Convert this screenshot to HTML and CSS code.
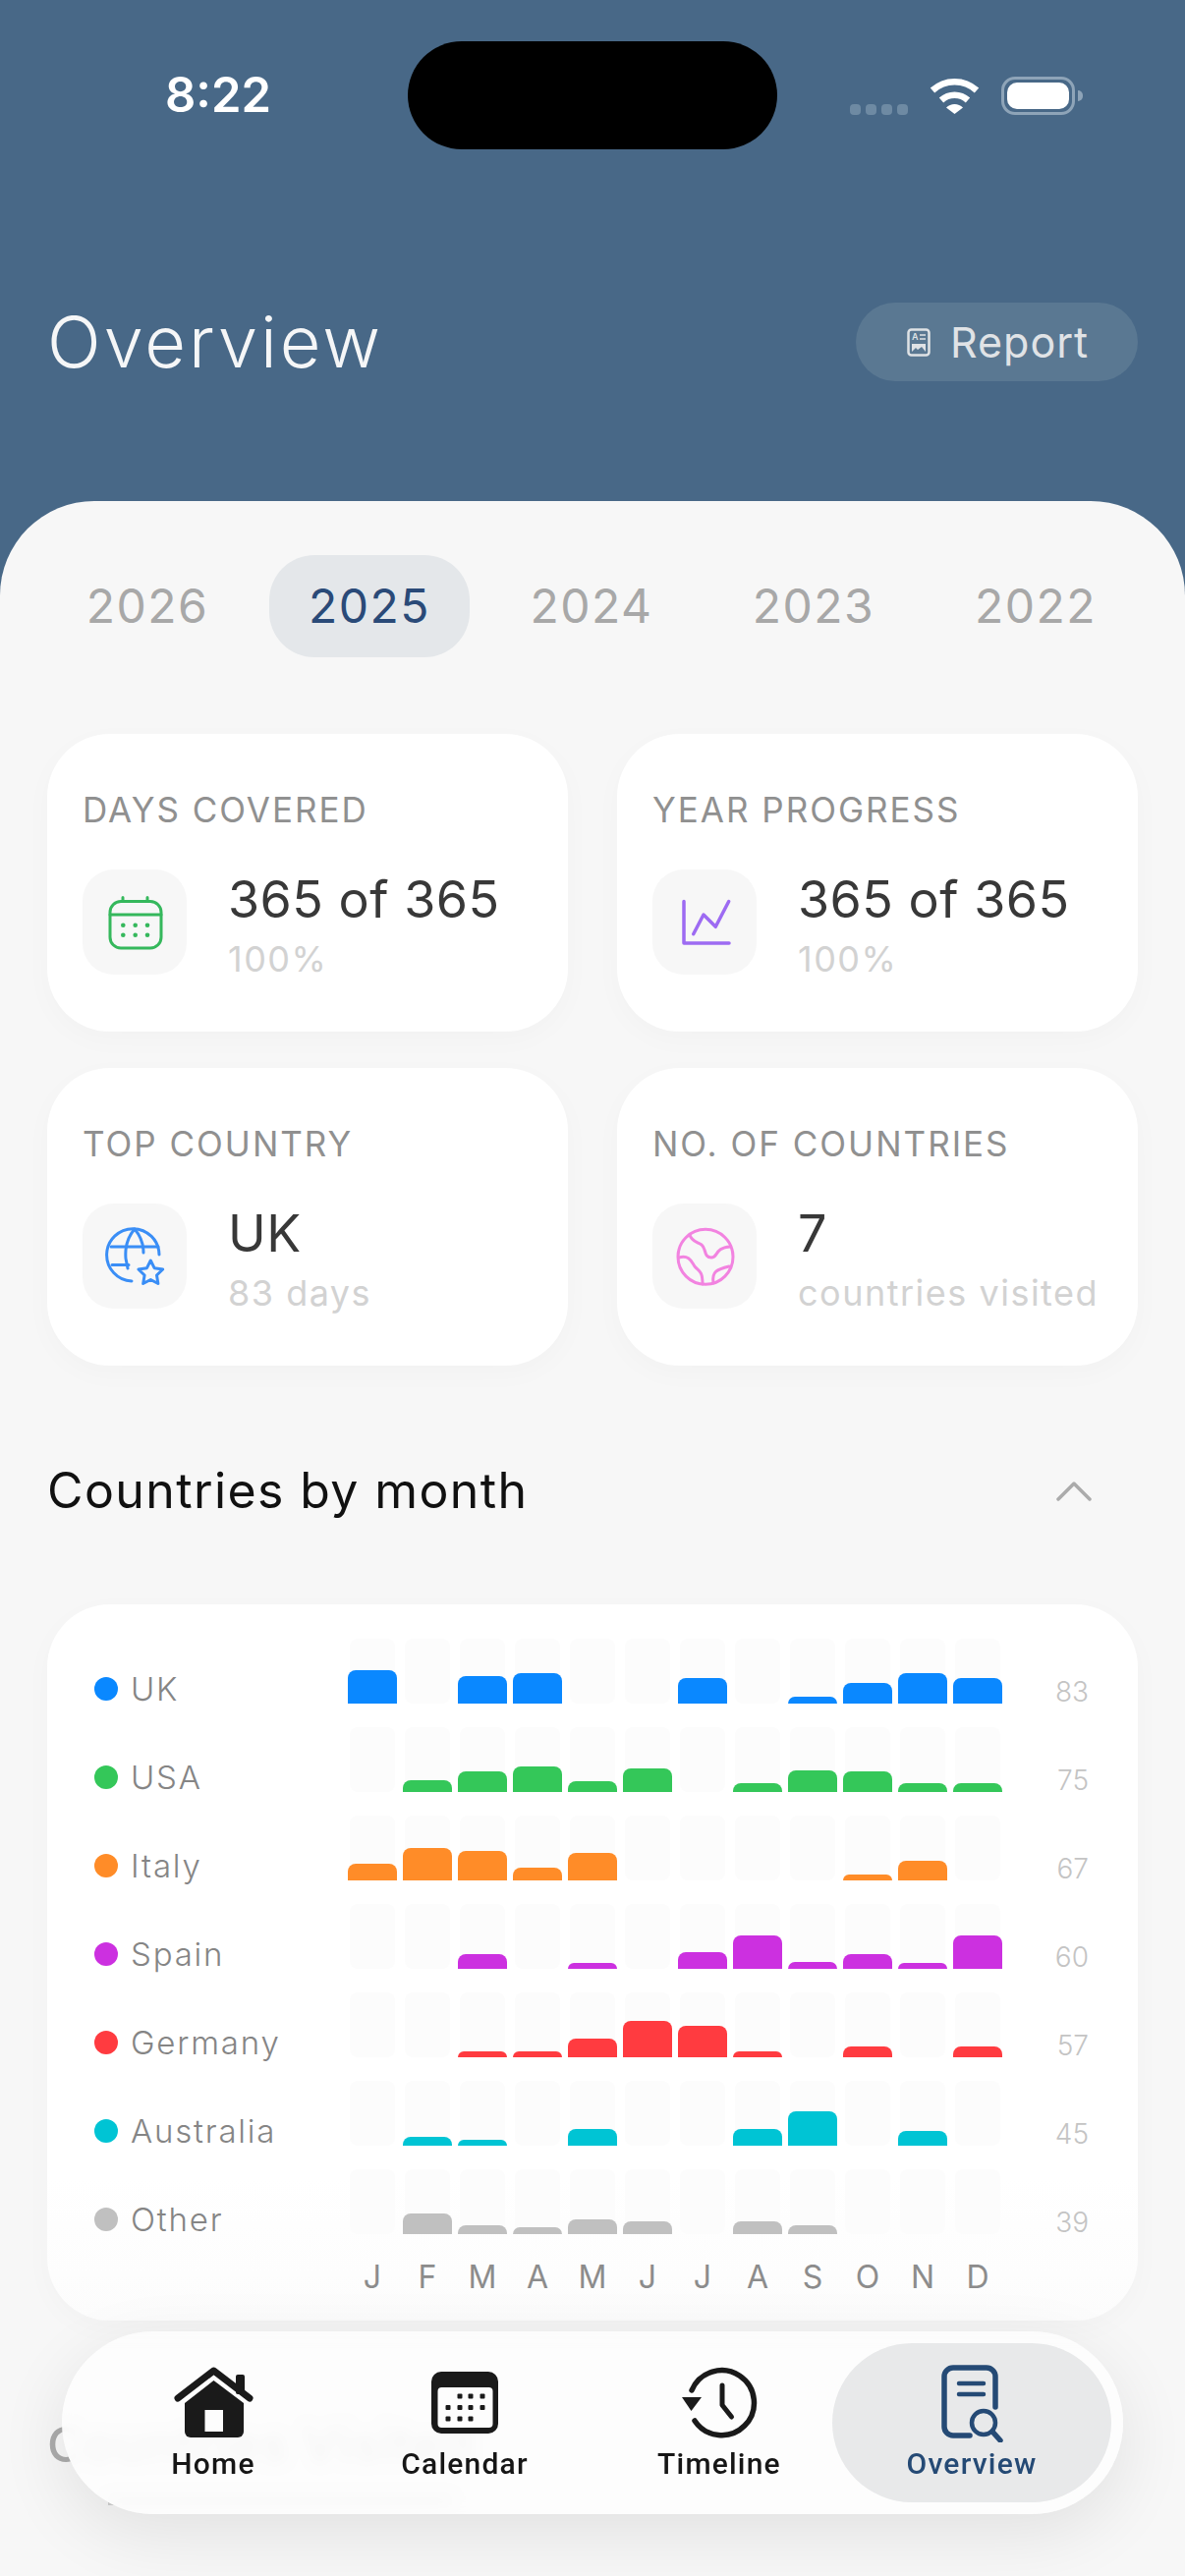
FILE: index.html
```html
<!DOCTYPE html>
<html>
	<head>
		<meta charset="utf-8">
		<title>Overview</title>
		<link rel="stylesheet" href="styles.css">
	</head>
	<body>
		<div id="phone">
			<div id="top">
				<div class="status">
					<span class="time">8:22</span>
					<span class="island"></span>
					<div class="status-icons">
						<span class="signal"><i></i><i></i><i></i><i></i></span>
						<svg class="wifi" width="51" height="37" viewBox="0 0 51 37">
							<path d="M3 13A33 33 0 0 1 48 13" fill="none" stroke="#fff" stroke-width="6.500"/>
							<path d="M12 23A20 20 0 0 1 39 23" fill="none" stroke="#fff" stroke-width="6.500"/>
							<path d="M17 30.500A12 12 0 0 1 34 30.500L25.500 37Z" fill="#fff"/>
						</svg>
						<span class="battery"><i></i></span>
						<span class="battery-cap"></span>
					</div>
				</div>
				<div class="title-row">
					<h1>Overview</h1>
					<div class="report">
						<svg width="24" height="29" viewBox="0 0 24 29">
							<rect x="1.500" y="1.500" width="21" height="26" rx="3" fill="none" stroke="#dfe2e5" stroke-width="2.500"/>
							<text x="5" y="12" class="report-a">A</text>
							<path d="M13 7H19M13 11H19" stroke="#dfe2e5" stroke-width="1.500"/>
							<path d="M5 24V16H19V24L15 19L11 22L9 20Z" fill="#dfe2e5"/>
						</svg>
						<span>Report</span>
					</div>
				</div>
			</div>

			<div id="sheet">
				<div class="years">
					<span>2026</span>
					<span class="on">2025</span>
					<span>2024</span>
					<span>2023</span>
					<span>2022</span>
				</div>

				<div class="stats">
					<div class="stat">
						<p class="stat-label">DAYS COVERED</p>
						<div class="stat-body">
							<div class="stat-icon">
								<svg width="106" height="106" viewBox="0 0 106 106" fill="none" stroke="#35b85c" stroke-width="3" stroke-linecap="round">
									<rect x="28" y="32.500" width="52" height="47.500" rx="11"/>
									<path d="M28 46H80M41 28.500V32.500M66 28.500V32.500"/>
									<g fill="#35b85c" stroke="none">
										<circle cx="41.300" cy="56.700" r="2.300"/><circle cx="53.700" cy="56.700" r="2.300"/><circle cx="66" cy="56.700" r="2.300"/>
										<circle cx="41.300" cy="66.700" r="2.300"/><circle cx="53.700" cy="66.700" r="2.300"/><circle cx="66" cy="66.700" r="2.300"/>
									</g>
								</svg>
							</div>
							<div>
								<p class="stat-value">365 of 365</p>
								<p class="stat-sub">100%</p>
							</div>
						</div>
					</div>
					<div class="stat">
						<p class="stat-label">YEAR PROGRESS</p>
						<div class="stat-body">
							<div class="stat-icon">
								<svg width="106" height="106" viewBox="0 0 106 106" fill="none" stroke="#9d6bf2" stroke-width="3.500" stroke-linecap="round" stroke-linejoin="round">
									<path d="M32 32.500V75H78"/>
									<path d="M41.700 65.700L52 46L64.300 58.300L77.700 32.500"/>
								</svg>
							</div>
							<div>
								<p class="stat-value">365 of 365</p>
								<p class="stat-sub">100%</p>
							</div>
						</div>
					</div>
					<div class="stat">
						<p class="stat-label">TOP COUNTRY</p>
						<div class="stat-body">
							<div class="stat-icon">
								<svg width="106" height="106" viewBox="0 0 106 106" fill="none" stroke="#3a8ef6" stroke-width="3" stroke-linecap="round" stroke-linejoin="round">
									<path d="M78 52A26.700 26.700 0 1 0 50 79"/>
									<path d="M29 44H77M30 62.500H47"/>
									<path d="M53 26C46 34 43 44 44 56L46 66M53 26C59 33 62 40 62 50"/>
									<path d="M69.300 58L73.100 65.700L81.700 67L75.500 73L76.900 81.500L69.300 77.500L61.700 81.500L63.100 73L56.900 67L65.500 65.700Z"/>
								</svg>
							</div>
							<div>
								<p class="stat-value">UK</p>
								<p class="stat-sub">83 days</p>
							</div>
						</div>
					</div>
					<div class="stat">
						<p class="stat-label">NO. OF COUNTRIES</p>
						<div class="stat-body">
							<div class="stat-icon">
								<svg width="106" height="106" viewBox="0 0 106 106" fill="none" stroke="#f283e0" stroke-width="3" stroke-linecap="round">
									<circle cx="54" cy="54.300" r="28"/>
									<path d="M38 32C40 39 46 39 50 42C55 46 52 55 60 55C67 55 63 45 79 44"/>
									<path d="M27 55C38 52 40 60 43 64C47 69 51 68 51 82"/>
									<path d="M62 81C60 69 66 67 78 64"/>
								</svg>
							</div>
							<div>
								<p class="stat-value">7</p>
								<p class="stat-sub">countries visited</p>
							</div>
						</div>
					</div>
				</div>

				<div class="section-head">
					<h2>Countries by month</h2>
					<svg class="chevron" width="38" height="23" viewBox="0 0 38 23" fill="none" stroke="#ababab" stroke-width="3.500" stroke-linecap="round" stroke-linejoin="round">
						<path d="M3 20L19 4L35 20"/>
					</svg>
				</div>

				<div class="chart">
					<div class="row">
						<div class="legend"><i class="dot uk"></i>UK</div>
						<div class="cells uk">
							<i><b style="height:34px"></b></i><i></i><i><b style="height:28px"></b></i><i><b style="height:31px"></b></i><i></i><i></i>
							<i><b style="height:26px"></b></i><i></i><i><b style="height:7px"></b></i><i><b style="height:21px"></b></i><i><b style="height:31px"></b></i><i><b style="height:26px"></b></i>
						</div>
						<div class="count">83</div>
					</div>
					<div class="row">
						<div class="legend"><i class="dot usa"></i>USA</div>
						<div class="cells usa">
							<i></i><i><b style="height:12px"></b></i><i><b style="height:21px"></b></i><i><b style="height:26px"></b></i><i><b style="height:11px"></b></i><i><b style="height:24px"></b></i>
							<i></i><i><b style="height:9px"></b></i><i><b style="height:22px"></b></i><i><b style="height:21px"></b></i><i><b style="height:9px"></b></i><i><b style="height:9px"></b></i>
						</div>
						<div class="count">75</div>
					</div>
					<div class="row">
						<div class="legend"><i class="dot italy"></i>Italy</div>
						<div class="cells italy">
							<i><b style="height:17px"></b></i><i><b style="height:33px"></b></i><i><b style="height:30px"></b></i><i><b style="height:13px"></b></i><i><b style="height:28px"></b></i><i></i>
							<i></i><i></i><i></i><i><b style="height:6px"></b></i><i><b style="height:20px"></b></i><i></i>
						</div>
						<div class="count">67</div>
					</div>
					<div class="row">
						<div class="legend"><i class="dot spain"></i>Spain</div>
						<div class="cells spain">
							<i></i><i></i><i><b style="height:15px"></b></i><i></i><i><b style="height:6px"></b></i><i></i>
							<i><b style="height:17px"></b></i><i><b style="height:34px"></b></i><i><b style="height:7px"></b></i><i><b style="height:15px"></b></i><i><b style="height:6px"></b></i><i><b style="height:34px"></b></i>
						</div>
						<div class="count">60</div>
					</div>
					<div class="row">
						<div class="legend"><i class="dot germany"></i>Germany</div>
						<div class="cells germany">
							<i></i><i></i><i><b style="height:6px"></b></i><i><b style="height:6px"></b></i><i><b style="height:19px"></b></i><i><b style="height:37px"></b></i>
							<i><b style="height:32px"></b></i><i><b style="height:6px"></b></i><i></i><i><b style="height:11px"></b></i><i></i><i><b style="height:11px"></b></i>
						</div>
						<div class="count">57</div>
					</div>
					<div class="row">
						<div class="legend"><i class="dot australia"></i>Australia</div>
						<div class="cells australia">
							<i></i><i><b style="height:9px"></b></i><i><b style="height:6px"></b></i><i></i><i><b style="height:17px"></b></i><i></i>
							<i></i><i><b style="height:17px"></b></i><i><b style="height:35px"></b></i><i></i><i><b style="height:15px"></b></i><i></i>
						</div>
						<div class="count">45</div>
					</div>
					<div class="row">
						<div class="legend"><i class="dot other"></i>Other</div>
						<div class="cells other">
							<i></i><i><b style="height:21px"></b></i><i><b style="height:9px"></b></i><i><b style="height:7px"></b></i><i><b style="height:15px"></b></i><i><b style="height:13px"></b></i>
							<i></i><i><b style="height:13px"></b></i><i><b style="height:9px"></b></i><i></i><i></i><i></i>
						</div>
						<div class="count">39</div>
					</div>
					<div class="months">
						<span>J</span><span>F</span><span>M</span><span>A</span><span>M</span><span>J</span>
						<span>J</span><span>A</span><span>S</span><span>O</span><span>N</span><span>D</span>
					</div>
				</div>

				<div class="section-head next">
					<h2>Countries Visited</h2>
					<svg class="chevron" width="38" height="23" viewBox="0 0 38 23" fill="none" stroke="#ababab" stroke-width="3.500" stroke-linecap="round" stroke-linejoin="round">
						<path d="M3 3L19 19L35 3"/>
					</svg>
				</div>
				<div class="next-sub"></div>
			</div>

			<div id="nav">
				<div class="tab">
					<div class="tab-icon">
						<svg width="81" height="72" viewBox="0 0 81 72">
							<rect x="63" y="8" width="9" height="20" rx="2" fill="#1a1a1a"/>
							<path d="M40.500 14L11 37V66a6 6 0 0 0 6 6H65a6 6 0 0 0 6-6V37Z" fill="#1a1a1a"/>
							<rect x="31.500" y="44" width="18.500" height="22" fill="#fdfdfd"/>
							<path d="M4 32L40.500 4L77 32" fill="none" stroke="#1a1a1a" stroke-width="7" stroke-linecap="round" stroke-linejoin="round"/>
						</svg>
					</div>
					<span>Home</span>
				</div>
				<div class="tab">
					<div class="tab-icon">
						<svg width="68" height="63" viewBox="0 0 68 63">
							<rect width="68" height="63" rx="10" fill="#1a1a1a"/>
							<rect x="6.500" y="16" width="56" height="41" rx="4" fill="#fdfdfd"/>
							<g fill="#1a1a1a">
								<rect x="26.500" y="22.500" width="5" height="5" rx="1"/><rect x="37.500" y="22.500" width="5" height="5" rx="1"/><rect x="49.500" y="22.500" width="5" height="5" rx="1"/>
								<rect x="14.500" y="34" width="5" height="5" rx="1"/><rect x="26.500" y="34" width="5" height="5" rx="1"/><rect x="37.500" y="34" width="5" height="5" rx="1"/><rect x="49.500" y="34" width="5" height="5" rx="1"/>
								<rect x="14.500" y="45.500" width="5" height="5" rx="1"/><rect x="26.500" y="45.500" width="5" height="5" rx="1"/><rect x="37.500" y="45.500" width="5" height="5" rx="1"/>
							</g>
						</svg>
					</div>
					<span>Calendar</span>
				</div>
				<div class="tab third">
					<div class="tab-icon">
						<svg width="78" height="74" viewBox="0 0 78 74" fill="none" stroke="#1a1a1a" stroke-width="5.500" stroke-linecap="round" stroke-linejoin="round">
							<path d="M14 56A33 33 0 1 0 11 25"/>
							<path d="M1 32H21L10.500 46Z" fill="#1a1a1a" stroke="none"/>
							<path d="M42 20V40L51.500 52" stroke-width="5"/>
						</svg>
					</div>
					<span>Timeline</span>
				</div>
				<div class="tab on">
					<div class="tab-icon">
						<svg width="66" height="82" viewBox="0 -2 66 82" fill="none" stroke="#254a75" stroke-width="5.500" stroke-linecap="round">
							<path d="M31 73H14a9 9 0 0 1-9-9V13a9 9 0 0 1 9-9H48a9 9 0 0 1 9 9V44"/>
							<path d="M20 20H45M20 31H45" stroke-width="4.500"/>
							<circle cx="45" cy="60" r="12" stroke-width="4.500"/>
							<path d="M54 69L62 78"/>
						</svg>
					</div>
					<span>Overview</span>
				</div>
			</div>
		</div>
	</body>
</html>
```
FILE: styles.css
```css
*{
	padding: 0;
	margin: 0;
	box-sizing: border-box;
}
body{
	background: #f7f7f7;
	font-family: Inter, "Noto Sans", sans-serif;
}
#phone{
	width: 1206px;
	height: 2622px;
	position: relative;
	overflow: hidden;
	background: #486887;
}

/* status bar */
#top{
	height: 510px;
}
.status{
	height: 152px;
	padding-top: 42px;
	display: flex;
	align-items: flex-start;
}
.time{
	width: 415px;
	padding: 30px 0 0 168px;
	font: 600 49px/50px Inter, sans-serif;
	color: #fff;
}
.island{
	width: 376px;
	height: 110px;
	border-radius: 55px;
	background: #000;
}
.status-icons{
	margin: 36px 0 0 74px;
	display: flex;
	align-items: center;
	height: 39px;
}
.signal{
	display: flex;
	gap: 5px;
	margin: 28px 22px 0 0;
}
.signal i{
	width: 11px;
	height: 11px;
	border-radius: 4px;
	background: #6e8aa3;
}
.wifi{
	margin-right: 22px;
}
.battery{
	width: 75px;
	height: 39px;
	border: 3px solid #8ea4b8;
	border-radius: 14px;
	padding: 3px;
}
.battery i{
	display: block;
	height: 100%;
	background: #fff;
	border-radius: 10px;
}
.battery-cap{
	width: 5px;
	height: 11px;
	margin-left: 3px;
	background: #8ea4b8;
	border-radius: 0 6px 6px 0;
}

/* title */
.title-row{
	margin-top: 156px;
	padding: 0 48px;
	display: flex;
	align-items: center;
	justify-content: space-between;
}
h1{
	font: 300 72px/80px Inter, sans-serif;
	letter-spacing: 3px;
	color: #f5f6f7;
}
.report{
	width: 287px;
	height: 80px;
	padding-left: 52px;
	display: flex;
	align-items: center;
	gap: 20px;
	border-radius: 40px;
	background: #5a7892;
	font-size: 43px;
	letter-spacing: 1px;
	color: #e0e3e6;
}
.report-a{
	font: 600 9px Inter, sans-serif;
	fill: #dfe2e5;
}

/* sheet */
#sheet{
	height: 2112px;
	padding: 55px 48px 0;
	background: #f7f7f7;
	border-radius: 96px 96px 0 0;
}
.years{
	display: grid;
	grid-template-columns: repeat(5,204px);
	gap: 22px;
}
.years span{
	height: 104px;
	border-radius: 46px;
	text-align: center;
	font: 400 48px/104px Inter, sans-serif;
	letter-spacing: 1.5px;
	color: #a8a8a8;
}
.years span.on{
	background: #e4e7ea;
	color: #2a4a78;
}

/* cards */
.stats{
	margin-top: 78px;
	display: grid;
	grid-template-columns: 530px 530px;
	column-gap: 50px;
	row-gap: 37px;
}
.stat{
	height: 303px;
	padding: 57px 0 0 36px;
	border-radius: 64px;
	background: #fff;
	box-shadow: 0 8px 30px rgba(0,0,0,0.025);
}
.stat-label{
	font: 400 35px/40px Inter, sans-serif;
	letter-spacing: 2px;
	color: #909090;
	white-space: nowrap;
}
.stat-body{
	margin-top: 41px;
	display: flex;
	gap: 42px;
}
.stat-icon{
	width: 106px;
	height: 107px;
	flex-shrink: 0;
	border-radius: 32px;
	background: #f7f7f7;
}
.stat-icon svg{
	display: block;
}
.stat-value{
	margin-top: 1px;
	font: 400 52px/60px Inter, sans-serif;
	letter-spacing: 0.5px;
	color: #383838;
	white-space: nowrap;
}
.stat-sub{
	margin-top: 8px;
	font: 400 36px/44px Inter, sans-serif;
	letter-spacing: 1.5px;
	color: #d2d2d2;
	white-space: nowrap;
}

/* chart */
.section-head{
	margin-top: 97px;
	height: 60px;
	display: flex;
	align-items: center;
	justify-content: space-between;
	padding-right: 46px;
}
h2{
	font: 400 50px/60px Inter, sans-serif;
	letter-spacing: 1.4px;
	color: #111;
}
.chart{
	margin-top: 86px;
	padding: 35px 50px 24px 48px;
	border-radius: 64px;
	background: linear-gradient(#fff 80%,#fcfcfc);
	box-shadow: 0 8px 30px rgba(0,0,0,0.025);
}
.row{
	height: 66px;
	margin-bottom: 24px;
	display: grid;
	grid-template-columns: 258px 666px 1fr;
	align-items: end;
}
.legend{
	height: 30px;
	display: flex;
	align-items: center;
	gap: 13px;
	font: 300 33px/30px Inter, sans-serif;
	letter-spacing: 1.8px;
	color: #858585;
}
.dot{
	width: 24px;
	height: 24px;
	border-radius: 50%;
}
.cells{
	height: 66px;
	padding: 0 2px;
	display: grid;
	grid-template-columns: repeat(12,46px);
	column-gap: 10px;
}
.cells i{
	display: flex;
	align-items: flex-end;
	background: #fcfcfc;
	border-radius: 8px;
}
.cells b{
	flex: 1;
	margin: 0 -2px;
	border-radius: 8px 8px 0 0;
}
.count{
	text-align: right;
	font: 300 28px/24px Inter, sans-serif;
	color: #c4c4c4;
}
.uk b,.dot.uk{background: #0a88ff;}
.usa b,.dot.usa{background: #34c759;}
.italy b,.dot.italy{background: #ff8c28;}
.spain b,.dot.spain{background: #cc30e0;}
.germany b,.dot.germany{background: #ff3b40;}
.australia b,.dot.australia{background: #00c4d4;}
.other b,.dot.other{background: #c0c0c0;}
.months{
	padding-left: 258px;
	display: grid;
	grid-template-columns: repeat(12,50px);
	column-gap: 6px;
	text-align: center;
	font: 400 32px/40px Inter, sans-serif;
	color: #8c8c8c;
}
.section-head.next{
	margin-top: 96px;
}
.section-head.next h2{
	font-weight: 500;
	color: #ababab;
}
.next-sub{
	width: 350px;
	height: 10px;
	margin: 22px 0 0 62px;
	background: #cfcfcf;
}

/* tab bar */
#nav{
	position: absolute;
	left: 63px;
	top: 2373px;
	width: 1080px;
	height: 186px;
	padding: 12px 12px 12px 39px;
	display: flex;
	gap: 26px;
	border-radius: 93px;
	background: rgba(253,253,253,0.9);
	backdrop-filter: blur(7px);
	box-shadow: 0 20px 70px rgba(0,0,0,0.09);
}
.tab{
	width: 230px;
	height: 162px;
	padding-top: 20px;
	display: flex;
	flex-direction: column;
	align-items: center;
	font: 500 30px/36px Roboto, sans-serif;
	letter-spacing: 1.2px;
	color: #161616;
}
.tab-icon{
	height: 80px;
	margin-bottom: 5px;
	display: flex;
	align-items: center;
}
.tab.third{
	margin-left: 3px;
}
.tab.on{
	width: 284px;
	margin-left: -26px;
	border-radius: 81px;
	background: #e8e9ea;
	color: #254a75;
}
```
